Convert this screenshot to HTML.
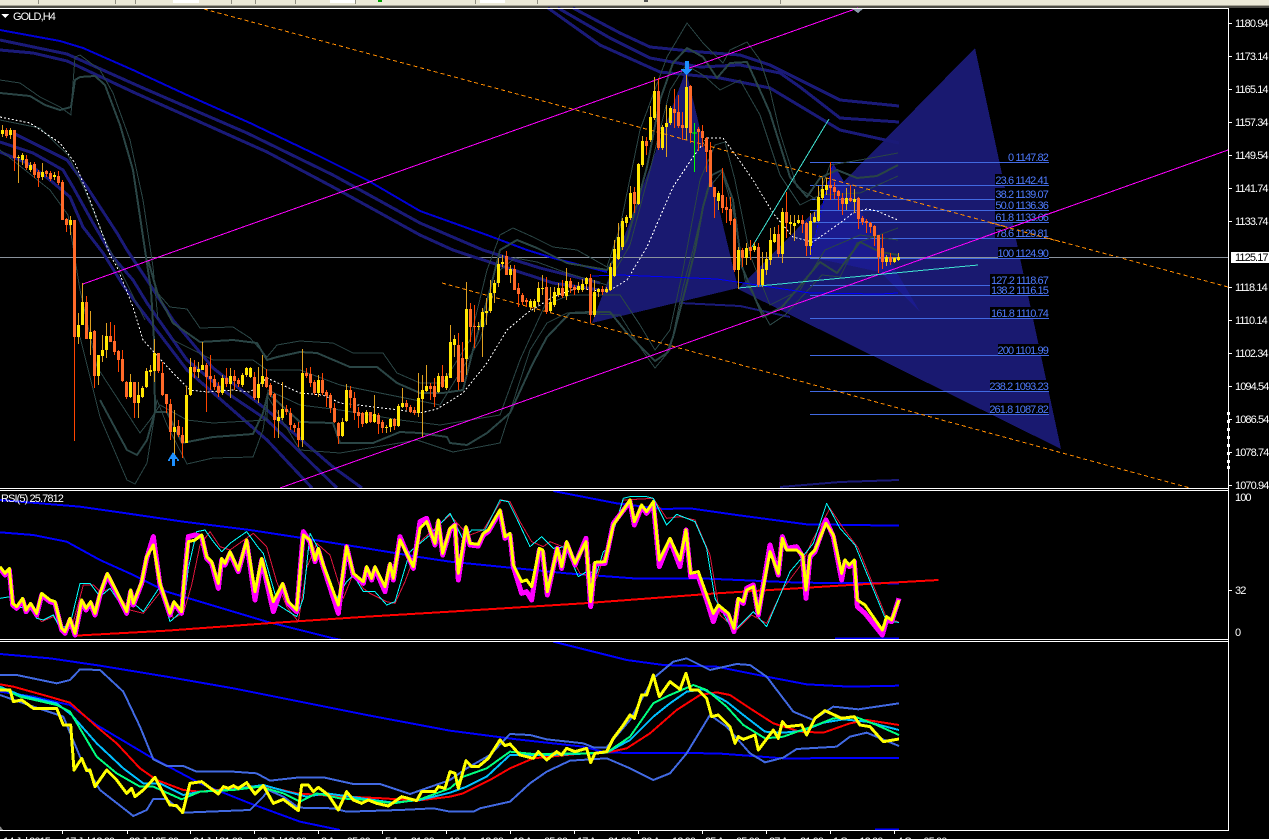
<!DOCTYPE html>
<html>
<head>
<meta charset="utf-8">
<title>GOLD,H4</title>
<style>
html,body{margin:0;padding:0;background:#000;overflow:hidden}
svg{display:block}
text{font-family:"Liberation Sans",sans-serif;font-size:11px;letter-spacing:-.9px;fill:#fff}
.f text{fill:#4f7bff;text-anchor:end}
.z *{vector-effect:non-scaling-stroke;fill:none;stroke-linejoin:round}
.l *{fill:none}
</style>
</head>
<body>
<svg width="1269" height="839" viewBox="0 0 1269 839" xmlns="http://www.w3.org/2000/svg" shape-rendering="crispEdges">
<rect width="1269" height="839" fill="#000"/>

<!-- toolbar strip -->
<rect width="1269" height="5" fill="#ece9d8"/>
<rect y="5" width="1269" height="1" fill="#a8a597"/>
<rect y="6" width="1269" height="2" fill="#4c4b45"/>
<path d="M38.500 0V4M115.500 0V4M135.500 0V4M231.500 0V4M255.500 0V4M295.500 0V4M355.500 0V4M475.500 0V4M537.500 0V4M780.500 0V4" stroke="#8e8c80"/>
<rect x="173" y="0" width="26" height="3" fill="#fff"/>
<rect x="330" y="0" width="25" height="3" fill="#fff"/>
<rect x="480" y="0" width="25" height="3" fill="#fff"/>
<rect x="378" y="0" width="4" height="2" fill="#00a000"/>
<rect x="644" y="0" width="4" height="2" fill="#505050"/>

<!-- harmonic polygons -->
<polygon points="592,323 686,70 738,288" fill="#191970"/>
<polygon points="975,48 1061,449 738,289" fill="#191970"/>
<polygon points="810,257 833,163 920,312 880,272" fill="#1b1b8e"/>
<path d="M810 257L833 163" stroke="#0000ff" stroke-dasharray="3 2" fill="none"/>

<!-- horizontal price line -->
<rect x="0" y="257" width="1228" height="1" fill="#8a929c"/>

<!-- fibo lines -->
<path d="M810 162.500H1049M810 185.500H1049M810 199.500H995M810 210.500H1049M810 222.500H1049M810 238.500H1049M810 258.500H1049M810 285.500H1049M810 295.500H1049M810 318.500H1049M810 355.500H1049M810 391.500H1049M810 414.500H1049" stroke="#4169e1" fill="none"/>

<!-- navy MA envelopes -->
<g class="l" stroke="#1a1a78" stroke-width="3" stroke-linejoin="round">
<polyline stroke="#0000d8" stroke-width="2" points="0,30 60,41 83,48 133,70 187,95 250,123 317,155 367,180 420,211 487,235 527,250 553,258 607,272"/>
<polyline points="0,40 67,54 143,88 247,133 333,175 420,223 483,250 540,268 600,283"/>
<polyline points="0,50 33,53 67,61 133,92 200,122 267,152 333,187 420,235 453,250 553,283 600,290"/>
<polyline points="573,8 620,33 650,47 700,52 740,55 770,65 800,80 840,100 899,106"/>
<polyline points="558,8 610,38 650,58 700,67 740,65 780,73 800,87 840,118 899,122"/>
<polyline points="548,8 600,45 660,72 720,78 770,88 840,130 899,143"/>
<polyline points="13,133 67,160 87,187 117,233 127,250 147,280 173,320 213,368 267,410 333,467 362,488"/>
<polyline points="0,142 33,153 63,170 73,187 93,223 113,257 133,280 147,303 187,360 227,393 267,420 337,488"/>
<polyline points="0,152 27,163 50,180 70,197 83,227 103,253 123,285 139,307 187,370 267,440 312,488"/>
<polyline stroke-width="2" points="780,487 840,482 899,480"/>
<polyline stroke-width="2" points="680,303 740,306 790,317"/>
</g>

<!-- slate bollinger bands -->
<g class="l" stroke="#2a4545" stroke-linejoin="round">
<g stroke-width="2">
<polyline points="0,93 30,96 45,105 60,110 71,107 75,80 80,77 95,76 105,85 120,125 133,170 145,250 151,290 154,340 155,412"/>
<polyline points="148,260 158,295 173,323 200,342 233,340 257,343 267,360 277,357 300,352 317,353 350,367 377,367 397,383 420,393 443,393 463,390 473,350 490,290 500,250 517,240 537,248 567,263 607,270 627,240 647,167 660,100 673,63 687,48 703,57 717,78 730,63 747,62 763,97 770,113 790,177 807,197 820,178 837,170 857,178 877,176 898,165"/>
<polyline points="100,400 127,450 137,455 147,440 155,412 167,412 182,443 213,437 253,434 263,413 268,393 300,422 333,423 340,443 373,443 400,432 420,433 447,437 450,443 467,445 487,433 510,413 533,363 547,337 570,313 590,312 610,312 627,333 647,353 655,361 667,353 673,337 687,283 695,250 703,207 712,175 722,170 733,200 742,267 763,317 782,307 820,262 837,273 860,242 880,252 898,255"/>
</g>
<polyline points="0,80 20,83 40,97 60,107 71,115 72,97 75,57 80,55 100,70 113,93 130,140 143,200 153,267 158,320"/>
<polyline points="155,290 170,307 187,309 200,328 233,327 250,338 267,357 277,345 300,341 333,343 353,353 383,353 397,373 420,383 443,383 470,340 487,270 500,235 513,228 533,237 553,247 577,250 607,267 620,227 640,130 667,57 687,23 703,43 723,63 730,50 747,42 760,60 770,90 780,133 797,187 817,200 830,165 860,160 898,153"/>
<polyline points="173,340 213,360 253,360 267,370 300,370 340,385 400,397 440,405 480,340 500,270 515,258 537,262 567,273 607,285 630,245 650,170 670,90 686,65 703,75 720,90 740,80 760,115 780,175 800,205 820,195 860,193 898,176"/>
<polyline points="80,337 100,417 127,480 135,484 147,463 157,400 167,425 187,464 213,458 253,457 263,430 268,397 300,450 340,453 417,440 453,452 500,443 517,390 530,350 547,323 567,313 620,315 640,347 655,368 670,350 683,287 693,250 707,190 722,172 733,210 745,280 770,325 785,315 822,275 840,277 857,243 898,228"/>
<polyline points="97,367 140,433 150,420 160,405 187,420 213,423 267,420 268,390 300,405 340,410 400,420 440,425 500,415 520,360 545,305 570,295 620,295 640,325 655,350 670,330 683,270 700,180 715,145 725,142 735,180 750,255 770,305 800,290 825,250 860,235 898,240"/>
<polyline points="0,120 40,128 68,155 85,190 105,240 125,280 145,320"/>
<polyline points="0,150 50,190 68,215 80,290 97,367"/>
</g>

<!-- white dashed MA -->
<polyline fill="none" stroke="#fff" stroke-width="1" stroke-dasharray="2 2" points="0,117 30,123 60,143 75,163 90,200 110,255 117,267 133,307 143,340 173,373 190,390 207,392 233,390 250,392 267,378 300,393 323,395 340,403 400,410 420,413 437,409 463,393 487,363 507,330 527,313 553,297 577,288 607,292 627,280 647,247 673,187 693,157 707,138 723,138 737,157 753,180 773,213 793,237 813,242 840,223 853,213 867,209 877,211 898,220"/>

<!-- blue thin line -->
<polyline fill="none" stroke="#0000ff" points="592,276 620,275 717,279 737,282 810,293 880,294 898,293"/>

<!-- channels -->
<line x1="83" y1="284" x2="858" y2="8" stroke="#ff00ff"/>
<line x1="280" y1="488" x2="1228" y2="150" stroke="#ff00ff"/>
<line x1="204" y1="9" x2="1228" y2="287" stroke="#ff8c00" stroke-dasharray="4 3"/>
<line x1="442" y1="283" x2="1190" y2="488" stroke="#ff8c00" stroke-dasharray="4 3"/>
<line x1="738" y1="288" x2="978" y2="265" stroke="#40e0d0"/>
<line x1="752" y1="247" x2="829" y2="119" stroke="#40e0d0"/>
<path d="M694.500 123V172M692 133H697" stroke="#00ff00" fill="none"/>

<!-- candles -->
<g transform="translate(.5,0)" fill="none">
<path stroke="#ff4500" d="M6 128V138M14 130V171M26 155V170M34 162V178M38 170V187M46 170V177M50 171V181M58 171V185M62 180V220M66 218V232M74 220V441M86 296V339M94 330V388M110 322V342M114 325V355M118 350V372M122 350V382M126 381V399M134 382V418M158 353V373M162 362V396M166 394V413M170 399V440M178 420V437M182 427V458M194 360V378M206 363V412M210 355V390M214 375V390M218 382V397M226 368V387M234 370V390M238 378V387M254 372V400M266 369V388M270 383V397M274 393V438M286 405V415M290 408V430M294 423V432M298 422V447M306 368V378M310 367V387M314 380V395M322 373V395M326 390V407M330 393V413M334 403V423M338 422V444M350 386V408M354 392V420M358 407V428M362 412V427M370 412V423M378 413V434M382 420V433M394 418V430M406 400V410M410 405V413M414 407V415M430 383V400M434 378V407M442 365V388M458 333V390M462 342V382M470 303V342M474 305V348M514 265V290M518 283V307M522 293V305M526 298V307M506 251V275M546 277V314M562 280V298M570 278V293M574 285V295M590 274V323M602 286V295M634 187V213M646 137V155M658 78V150M674 89V128M678 95V128M682 112V140M690 85V143M698 127V151M702 125V147M706 137V172M710 142V187M714 187V218M722 168V213M726 197V223M730 197V225M734 218V272M742 248V267M750 240V260M758 243V287M778 225V257M786 192V238M802 215V233M806 222V256M830 162V200M834 182V199M838 190V210M842 193V215M850 185V202M858 197V229M862 216V225M866 219V233M870 222V233M874 225V246M878 235V273M882 234V269M890 253V265"/>
<path stroke="#e0a020" d="M2 125V137M10 128V139M18 155V183M22 153V165M30 162V172M42 163V180M54 172V180M70 216V235M78 313V344M82 283V325M90 311V355M98 355V385M102 335V362M106 323V358M130 374V398M138 382V418M142 386V398M146 368V388M150 365V376M154 339V382M174 410V457M186 386V443M190 358V396M198 362V378M202 342V370M222 375V395M230 368V398M242 373V387M246 367V377M250 367V378M258 367V403M262 355V387M278 410V438M282 382V420M302 349V447M318 375V397M342 418V437M346 384V422M366 410V424M374 395V423M386 425V433M390 418V432M398 404V427M402 388V408M418 373V417M422 375V437M426 365V392M438 373V393M446 373V390M450 325V378M454 335V357M466 282V375M478 322V330M482 308V357M486 298V325M490 280V313M494 280V303M498 258V287M502 255V267M510 265V283M530 299V310M534 299V312M538 282V305M542 275V295M550 287V313M554 287V307M558 283V297M566 268V300M578 282V293M582 279V292M586 277V290M594 280V317M598 288V297M606 287V293M610 263V291M614 240V277M618 223V260M622 218V250M626 215V227M630 186V220M638 163V205M642 136V167M650 106V142M654 77V120M662 125V150M666 105V157M670 106V125M686 72V140M718 191V210M738 247V289M746 243V265M754 242V252M762 252V287M766 252V275M770 228V265M774 227V243M782 208V263M790 215V235M794 215V241M798 215V224M810 213V255M814 212V223M818 186V222M822 178V200M826 178V195M846 188V210M854 189V213M886 255V266M894 257V263M898 253V261"/>
<path stroke="#ff6a29" stroke-width="3" d="M6 130V136M14 130V158M26 159V168M34 164V175M38 172V178M46 171V174M50 173V179M58 176V183M62 182V220M66 219V225M74 220V337M86 302V339M94 331V376M110 336V342M114 341V352M118 351V360M122 359V381M126 382V397M134 382V403M158 353V371M162 373V395M166 394V404M170 404V432M178 426V435M182 435V443M194 367V372M206 365V377M210 376V379M214 379V387M218 386V393M226 378V384M234 376V381M238 380V384M254 377V398M266 377V387M270 385V395M274 394V420M286 409V412M290 413V425M294 425V428M298 428V440M306 373V376M310 374V383M314 382V393M322 380V393M326 392V396M330 395V408M334 408V422M338 423V436M350 390V398M354 398V413M358 412V416M362 413V424M370 412V422M378 415V424M382 422V428M394 419V426M406 403V407M410 407V412M414 410V413M430 386V389M434 386V397M442 376V387M458 345V382M462 358V382M470 309V327M474 326V327M514 269V290M506 256V275M518 288V294M522 295V302M526 300V302M546 287V312M562 288V296M570 281V288M574 287V290M590 278V315M602 289V292M634 192V204M646 141V146M658 91V148M674 109V113M678 112V126M682 125V128M690 86V133M698 129V132M702 131V138M706 138V152M710 150V187M714 187V197M722 195V208M726 207V210M730 209V221M734 219V270M742 250V258M750 247V251M758 247V285M778 234V254M786 212V223M802 220V224M806 223V246M830 185V188M834 187V192M838 191V196M842 198V204M850 198V201M858 198V219M862 218V222M866 221V223M870 223V227M874 226V236M878 235V257M882 248V262M890 257V262"/>
<path stroke="#ffe600" stroke-width="3" d="M2 130V134M10 130V135M18 157V158M22 155V160M30 165V170M42 172V177M54 175V177M70 220V225M78 325V337M82 302V325M90 332V339M98 355V376M102 350V356M106 336V350M130 382V397M138 395V403M142 388V397M146 371V387M150 370V372M154 353V371M174 427V432M186 395V443M190 367V395M198 369V372M202 365V370M222 378V393M230 376V384M242 375V385M246 368V375M250 368V377M258 384V398M262 376V384M278 417V421M282 409V418M302 373V440M318 380V393M342 422V436M346 390V421M366 412V423M374 414V422M386 427V428M390 419V427M398 406V426M402 403V407M418 398V413M422 390V399M426 386V391M438 376V392M446 376V388M450 342V378M454 339V345M466 309V359M478 326V327M482 312V327M486 311V313M490 293V311M494 283V293M498 264V283M502 262V264M510 269V275M530 301V307M534 301V307M538 288V302M542 288V289M550 302V311M554 292V305M558 288V295M566 281V296M578 286V290M582 284V290M586 278V284M594 292V315M598 289V292M606 289V292M610 267V290M614 249V276M618 237V259M622 221V247M626 217V223M630 193V218M638 164V204M642 141V165M650 117V140M654 91V118M662 127V148M666 123V127M670 108V123M686 87V128M718 193V201M738 250V270M746 248V258M754 246V250M762 269V285M766 259V270M770 240V260M774 234V242M782 212V254M790 222V224M794 223V226M798 220V223M810 221V246M814 217V222M818 197V221M822 189V198M826 185V190M846 198V204M854 199V202M886 257V262M894 258V262M898 257V260"/>
</g>

<!-- arrows -->
<path d="M173 452L179 460V461H177V459H175V466H172V459H170V461H168V460Z" fill="#1e90ff"/>
<path d="M685 61H689V69H692V70L686.500 75L681 70V69H685Z" fill="#1e90ff"/>
<polygon points="851,8 864,8 858,13" fill="#8a98a8"/>

<!-- fibo labels -->
<g fill="#000">
<rect x="1007" y="151" width="42" height="11"/><rect x="995" y="174" width="54" height="11"/><rect x="995" y="188" width="54" height="11"/><rect x="995" y="199" width="54" height="11"/><rect x="995" y="211" width="54" height="11"/><rect x="995" y="227" width="54" height="11"/><rect x="998" y="247" width="51" height="11"/><rect x="990" y="274" width="59" height="11"/><rect x="990" y="284" width="59" height="11"/><rect x="990" y="307" width="59" height="11"/><rect x="998" y="344" width="51" height="11"/><rect x="990" y="380" width="59" height="11"/><rect x="990" y="403" width="59" height="11"/>
</g>
<g class="f">
<text x="1048" y="161">0 1147.82</text>
<text x="1048" y="184">23.6 1142.41</text>
<text x="1048" y="198">38.2 1139.07</text>
<text x="1048" y="209">50.0 1136.36</text>
<text x="1048" y="221">61.8 1133.66</text>
<text x="1048" y="237">78.6 1129.81</text>
<text x="1048" y="257">100 1124.90</text>
<text x="1048" y="284">127.2 1118.67</text>
<text x="1048" y="294">138.2 1116.15</text>
<text x="1048" y="317">161.8 1110.74</text>
<text x="1048" y="354">200 1101.99</text>
<text x="1048" y="390">238.2 1093.23</text>
<text x="1048" y="413">261.8 1087.82</text>
</g>
<path d="M1049 257.500H1228" stroke="#8a929c"/>
<line x1="985" y1="236.500" x2="1060" y2="209.800" stroke="#ff00ff"/>
<line x1="990" y1="222.700" x2="1060" y2="241.700" stroke="#ff8c00" stroke-dasharray="4 3"/>

<!-- RSI panel -->
<svg x="0" y="491" width="1228" height="148" viewBox="0 491 1228 148">
<g class="z" transform="translate(0,485) scale(.33333)">
<polyline stroke="#0000ff" stroke-width="2" points="0,45 120,55 240,65 400,88 550,110 750,135 900,158 1100,190 1250,215 1350,230 1450,240 1550,250 1700,265 1900,280 2100,280 2400,293 2697,295"/>
<polyline stroke="#0000ff" stroke-width="2" points="0,142 100,150 200,170 300,225 400,270 500,320 600,350 800,410 1000,460 1050,470"/>
<polyline stroke="#0000ff" stroke-width="2" points="1660,18 1850,55 1990,72 2070,70 2210,90 2420,118 2697,122"/>
<polyline stroke="#0000ff" stroke-width="2" points="2505,461 2697,461"/>
<polyline stroke="#ff0000" stroke-width="2" points="225,452 500,437 800,415 1100,395 1350,380 1750,355 2150,325 2550,300 2815,285"/>
<polyline stroke="#dc143c" stroke-width="1" points="0,340 30,335 40,360 90,365 125,410 160,395 185,430 215,430 250,300 280,300 300,320 340,310 390,375 430,385 490,310 520,400 550,385 575,300 600,180 630,140 660,185 690,195 760,145 800,185 830,290 860,365 895,410 920,250 950,175 990,210 1030,340 1060,265 1090,310 1110,325 1160,350 1185,355 1215,290 1260,170 1350,90 1390,135 1410,150 1450,135 1505,45 1530,50 1560,110 1595,170 1630,185 1650,170 1700,190 1740,265 1790,280 1820,190 1870,45 1960,40 2000,100 2040,95 2085,105 2130,210 2160,390 2210,435 2255,390 2300,415 2350,310 2410,230 2435,170 2490,70 2530,130 2575,190 2660,400 2695,410"/>
<polyline stroke="#00ffff" stroke-width="1" points="0,340 30,335 38,365 90,370 110,400 130,405 160,390 180,430 210,420 240,295 270,295 300,335 330,310 370,370 395,350 430,380 480,305 510,410 550,375 565,250 590,140 615,135 640,170 665,200 690,175 740,140 775,188 790,205 810,275 835,360 890,395 910,340 930,145 960,200 1010,340 1040,290 1060,270 1090,320 1125,320 1160,360 1185,350 1230,200 1290,150 1350,85 1390,165 1415,135 1455,135 1500,45 1525,50 1550,100 1590,185 1625,155 1660,190 1695,185 1735,275 1760,260 1790,265 1810,200 1825,190 1870,40 1890,35 1940,35 1960,40 2000,120 2030,88 2085,110 2120,190 2145,340 2200,440 2260,380 2300,425 2370,260 2400,225 2440,175 2480,55 2520,130 2565,180 2660,410 2697,412"/>
<polyline stroke="#ff00ff" stroke-width="5" transform="translate(0,5)" points="0,245 15,265 28,250 38,355 50,365 68,340 78,375 92,355 110,385 125,325 150,345 165,350 185,430 195,440 210,400 225,445 245,345 258,370 272,350 285,385 300,325 322,265 345,310 380,380 392,315 400,355 425,290 440,215 460,150 480,295 510,385 522,350 545,380 552,290 565,150 585,145 605,150 620,215 635,230 655,305 665,220 675,235 690,200 715,255 740,165 765,340 785,220 820,375 848,295 865,350 890,375 910,135 930,165 945,225 955,190 970,240 1015,380 1040,180 1060,265 1090,290 1100,245 1115,280 1125,245 1155,315 1170,235 1180,280 1200,150 1240,245 1260,105 1280,95 1305,175 1315,105 1328,205 1350,130 1365,115 1375,280 1398,125 1410,175 1435,178 1450,145 1465,135 1500,75 1515,155 1530,145 1540,240 1565,320 1580,315 1595,340 1618,190 1628,195 1642,325 1672,185 1685,245 1700,170 1725,235 1758,155 1772,360 1785,232 1815,230 1840,110 1890,45 1903,115 1925,60 1940,80 1960,50 1978,240 2010,160 2040,240 2058,130 2072,270 2095,270 2120,340 2140,405 2155,360 2185,385 2202,435 2215,340 2230,350 2240,305 2260,295 2275,385 2310,175 2335,265 2347,150 2360,185 2390,180 2408,210 2418,335 2430,210 2445,195 2478,100 2500,150 2525,280 2535,225 2548,240 2563,225 2572,360 2595,380 2647,445 2660,400 2675,405 2697,335"/>
<polyline stroke="#ffff00" stroke-width="3" points="0,245 15,265 28,250 38,355 50,365 68,340 78,375 92,355 110,385 125,325 150,345 165,350 185,430 195,440 210,400 225,445 245,345 258,370 272,350 285,385 300,325 322,265 345,310 380,380 392,315 400,355 425,290 440,215 460,180 480,295 510,385 522,350 545,380 552,290 565,170 585,165 605,150 620,215 635,230 655,295 665,220 675,235 690,200 715,255 740,165 765,320 785,220 820,350 848,295 865,350 890,375 910,150 930,165 945,225 955,190 970,240 1015,360 1040,185 1060,265 1090,290 1100,245 1115,280 1125,245 1155,305 1170,235 1180,280 1200,165 1240,245 1260,130 1280,110 1305,175 1315,105 1328,205 1350,130 1365,120 1375,265 1398,125 1410,175 1435,178 1450,145 1465,135 1500,75 1515,155 1530,145 1540,240 1565,290 1580,285 1595,305 1618,190 1628,195 1642,320 1672,190 1685,245 1700,170 1725,235 1758,170 1772,350 1785,232 1815,230 1840,120 1890,45 1903,110 1925,60 1940,80 1960,50 1978,225 2010,160 2040,225 2058,135 2072,265 2095,260 2120,330 2140,385 2155,360 2185,385 2202,430 2215,340 2230,350 2240,315 2260,305 2275,385 2310,200 2335,265 2347,160 2360,195 2390,195 2408,210 2418,315 2430,210 2445,195 2478,115 2500,150 2525,265 2535,225 2548,240 2563,225 2572,345 2595,360 2647,435 2660,395 2675,405 2697,345"/>
</g>
</svg>

<!-- Third panel -->
<svg x="0" y="642" width="1228" height="188" viewBox="0 642 1228 188">
<g class="z" transform="translate(0,640) scale(.33333)">
<polyline stroke="#0000ff" stroke-width="2" points="0,42 150,55 300,77 500,110 700,145 900,185 1100,225 1350,272 1550,298 1750,320 1820,338 2150,340 2350,355 2697,354"/>
<polyline stroke="#0000ff" stroke-width="2" points="0,155 100,170 210,195 290,255 450,350 600,430 750,490 900,545 1020,570"/>
<polyline stroke="#0000ff" stroke-width="2" points="1660,5 1880,60 1990,75 2150,80 2300,110 2420,133 2550,140 2697,137"/>
<polyline stroke="#0000ff" stroke-width="2" points="2625,569 2697,569"/>
<polyline stroke="#4169e1" stroke-width="2" points="0,105 50,105 170,130 210,120 240,88 300,90 370,155 420,260 460,358 500,378 550,378 590,395 700,395 770,400 810,422 900,412 970,412 1060,432 1140,432 1230,462 1350,420 1400,385 1470,345 1530,282 1590,285 1640,298 1750,310 1780,322 1820,322 1890,240 1960,115 2020,65 2060,55 2130,90 2210,72 2250,75 2300,110 2380,215 2440,240 2500,200 2575,208 2697,190"/>
<polyline stroke="#4169e1" stroke-width="2" points="0,165 100,200 190,230 240,350 300,450 400,528 440,510 460,477 500,477 550,518 750,510 790,470 805,450 850,470 895,503 1000,505 1040,515 1200,510 1300,505 1350,515 1420,515 1440,505 1530,485 1590,430 1640,395 1710,362 1820,355 1890,385 1960,420 2010,400 2060,340 2130,225 2180,260 2250,340 2295,367 2350,353 2390,327 2510,320 2550,290 2600,278 2697,318"/>
<polyline stroke="#ff0000" stroke-width="2" points="0,133 40,140 130,165 210,188 290,260 350,310 420,385 470,420 550,450 600,455 700,445 790,437 890,460 1000,468 1150,475 1250,482 1350,470 1390,460 1470,420 1530,385 1600,355 1750,340 1820,338 1880,325 1950,280 2030,210 2100,165 2150,157 2190,165 2250,205 2320,250 2400,275 2470,278 2550,250 2600,240 2697,255"/>
<polyline stroke="#00bfff" stroke-width="2" points="0,140 60,165 170,190 215,225 290,310 370,385 430,430 480,430 550,465 600,455 700,448 790,435 850,452 920,470 980,460 1050,470 1120,480 1180,488 1260,480 1350,458 1400,440 1460,410 1530,345 1650,345 1820,338 1890,300 1960,230 2010,190 2060,155 2110,148 2180,185 2230,225 2295,275 2350,278 2410,272 2470,248 2530,238 2600,245 2697,270"/>
<polyline stroke="#00ff7f" stroke-width="2" points="0,143 60,170 170,195 210,215 290,350 350,400 420,440 460,440 545,478 600,455 700,450 780,440 850,460 900,485 950,460 1020,475 1100,480 1180,490 1260,478 1350,445 1390,410 1460,385 1530,335 1600,342 1750,340 1820,338 1890,290 1960,190 2010,165 2080,135 2120,150 2180,200 2230,255 2295,295 2350,290 2400,272 2450,255 2500,235 2570,232 2630,255 2697,285"/>
<polyline stroke="#ffff00" stroke-width="3" points="0,150 30,150 40,185 65,180 100,205 170,205 190,255 212,255 222,390 245,355 260,392 270,390 285,440 320,390 350,420 380,460 395,445 405,470 430,450 465,412 490,460 510,495 530,497 548,518 570,430 605,425 655,462 670,440 685,445 700,437 715,445 740,428 765,462 790,437 820,490 850,478 895,512 905,435 925,435 940,455 955,442 985,465 1015,510 1040,455 1060,480 1085,490 1105,480 1130,490 1165,498 1205,470 1250,482 1265,455 1305,455 1315,440 1335,445 1350,395 1365,400 1375,445 1398,362 1415,380 1435,380 1465,355 1500,300 1515,317 1530,312 1560,345 1600,355 1615,335 1640,360 1670,335 1685,345 1700,325 1725,335 1760,325 1772,368 1785,340 1820,335 1840,295 1870,255 1890,225 1903,235 1925,165 1940,165 1960,105 1978,170 2010,125 2040,148 2058,100 2072,150 2095,150 2120,175 2135,230 2155,225 2190,260 2205,310 2215,290 2230,298 2265,285 2275,330 2320,270 2335,295 2347,245 2360,260 2405,255 2420,285 2445,235 2475,212 2525,235 2563,230 2580,255 2610,260 2650,305 2697,297"/>
</g>
<polygon points="0,826 3,830 0,830" fill="#888"/>
</svg>

<!-- frame lines -->
<g fill="#fff">
<rect x="0" y="8" width="1229" height="1"/>
<rect x="0" y="488" width="1229" height="1"/>
<rect x="0" y="490" width="1229" height="1"/>
<rect x="0" y="639" width="1229" height="1"/>
<rect x="0" y="641" width="1229" height="1"/>
<rect x="0" y="830" width="1229" height="1"/>
<rect x="1228" y="8" width="1" height="823"/>
</g>
<g fill="#fff">
<rect x="1227" y="412" width="3" height="3"/><rect x="1227" y="420" width="3" height="3"/><rect x="1227" y="428" width="3" height="3"/><rect x="1227" y="436" width="3" height="3"/><rect x="1227" y="444" width="3" height="3"/><rect x="1227" y="452" width="3" height="3"/><rect x="1227" y="460" width="3" height="3"/><rect x="1227" y="466" width="3" height="3"/>
</g>

<!-- ticks -->
<path stroke="#fff" fill="none" d="M1229 23.500H1232M1229 56.500H1232M1229 89.500H1232M1229 122.500H1232M1229 155.500H1232M1229 188.500H1232M1229 221.500H1232M1229 287.500H1232M1229 320.500H1232M1229 353.500H1232M1229 386.500H1232M1229 419.500H1232M1229 452.500H1232M1229 485.500H1232M1229 590.500H1232M62.500 831V834M127.500 831V834M190.500 831V834M254.500 831V834M318.500 831V834M382.500 831V834M446.500 831V834M510.500 831V834M574.500 831V834M638.500 831V834M702.500 831V834M766.500 831V834M830.500 831V834M894.500 831V834"/>

<!-- axis labels -->
<text x="1235" y="27">1180.94</text>
<text x="1235" y="60">1173.14</text>
<text x="1235" y="93">1165.14</text>
<text x="1235" y="126">1157.34</text>
<text x="1235" y="159">1149.54</text>
<text x="1235" y="192">1141.74</text>
<text x="1235" y="225">1133.74</text>
<rect x="1231" y="252" width="38" height="11" fill="#fff"/>
<text x="1235" y="261" style="fill:#000">1125.17</text>
<text x="1235" y="291">1118.14</text>
<text x="1235" y="324">1110.14</text>
<text x="1235" y="357">1102.34</text>
<text x="1235" y="390">1094.54</text>
<text x="1235" y="423">1086.54</text>
<text x="1235" y="456">1078.74</text>
<text x="1235" y="489">1070.94</text>
<text x="1235" y="501">100</text>
<text x="1235" y="594">32</text>
<text x="1235" y="636">0</text>

<text x="1" y="502">RSI(5) 25.7812</text>
<polygon points="1,14 9,14 5,18" fill="#fff"/>
<text x="13" y="20">GOLD,H4</text>

<text x="3" y="845">14 Jul 2015</text>
<text x="65" y="845">17 Jul 12:00</text>
<text x="129" y="845">22 Jul 05:00</text>
<text x="193" y="845">24 Jul 21:00</text>
<text x="257" y="845">29 Jul 12:00</text>
<text x="321" y="845">3 Aug 05:00</text>
<text x="385" y="845">5 Aug 21:00</text>
<text x="449" y="845">10 Aug 12:00</text>
<text x="513" y="845">13 Aug 05:00</text>
<text x="577" y="845">17 Aug 21:00</text>
<text x="641" y="845">20 Aug 12:00</text>
<text x="705" y="845">25 Aug 05:00</text>
<text x="769" y="845">27 Aug 21:00</text>
<text x="833" y="845">1 Sep 12:00</text>
<text x="897" y="845">4 Sep 05:00</text>
</svg>
</body>
</html>
